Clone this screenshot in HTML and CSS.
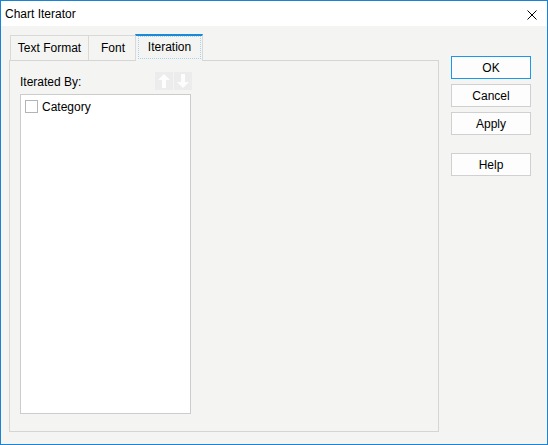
FILE: index.html
```html
<!DOCTYPE html>
<html>
<head>
<meta charset="utf-8">
<link rel="stylesheet" href="styles.css">
</head>
<body>
<div class="window">
  <div class="titlebar">
    <span class="title">Chart Iterator</span>
    <svg class="close" width="10" height="10" viewBox="0 0 10 10"><path d="M0.5 0.5 L9.5 9.5 M9.5 0.5 L0.5 9.5" stroke="#000" stroke-width="1" fill="none"/></svg>
  </div>
  <div class="body">
    <div class="tabctl">
      <div class="tabs">
        <div class="tab first">Text Format</div>
        <div class="tab mid">Font</div>
        <div class="tab active"><span class="focus">Iteration</span></div>
      </div>
      <div class="panel">
        <div class="col">
          <div class="row">
            <span class="label">Iterated By:</span>
            <div class="arrows">
              <span class="arrow"><svg width="18" height="18" viewBox="0 0 18 18"><polygon points="9,2 15,8 11,8 11,16 7,16 7,8 3,8" fill="#fdfdfd"/></svg></span>
              <span class="arrow"><svg width="18" height="18" viewBox="0 0 18 18"><polygon points="9,16 15,10 11,10 11,2 7,2 7,10 3,10" fill="#fdfdfd"/></svg></span>
            </div>
          </div>
          <div class="list">
            <div class="item"><span class="cb"></span><span>Category</span></div>
          </div>
        </div>
      </div>
    </div>
    <div class="buttons">
      <div class="btn default">OK</div>
      <div class="btn">Cancel</div>
      <div class="btn">Apply</div>
      <div class="btn help">Help</div>
    </div>
  </div>
</div>
</body>
</html>
```

FILE: styles.css
```css
html, body {
  margin: 0;
  padding: 0;
}
body {
  font-family: "Liberation Sans", Arial, sans-serif;
  font-size: 12px;
  color: #000;
}
.window {
  width: 548px;
  height: 445px;
  box-sizing: border-box;
  border: 1px solid #1883d7;
  display: flex;
  flex-direction: column;
  background: #f4f5f3;
}
.titlebar {
  height: 25px;
  background: #fff;
  display: flex;
  align-items: center;
  justify-content: space-between;
  padding: 0 10px 0 4px;
  flex: none;
}
.title {
  line-height: 14px;
  margin-top: 1px;
}
.close {
  display: block;
  margin-top: 2px;
}
.body {
  flex: 1;
  display: flex;
  padding: 8px 0 0 8px;
}
.tabctl {
  width: 430px;
  display: flex;
  flex-direction: column;
}
.tabs {
  display: flex;
  align-items: flex-end;
  height: 26px;
  padding-left: 1px;
}
.tab {
  box-sizing: border-box;
  height: 25px;
  border-top: 1px solid #d9d9d9;
  display: flex;
  align-items: center;
  justify-content: center;
  background: #f4f5f3;
}
.tab.first {
  width: 79px;
  border-left: 1px solid #d9d9d9;
  border-right: 1px solid #d9d9d9;
}
.tab.mid {
  width: 46px;
  padding-left: 2px;
}
.tab.active {
  width: 68px;
  height: 27px;
  margin-bottom: -1px;
  position: relative;
  z-index: 1;
  border-top: 2px solid #1b8ad6;
  border-left: 1px solid #d9d9d9;
  border-right: 1px solid #d9d9d9;
  padding: 0 1px 2px 2px;
  align-items: stretch;
}
.focus {
  flex: 1;
  display: flex;
  align-items: center;
  justify-content: center;
  border: 1px dotted #a7d2ee;
  padding-bottom: 1px;
}
.panel {
  box-sizing: border-box;
  height: 372px;
  border: 1px solid #d5d5d5;
  padding: 11px 0 0 10px;
}
.col {
  width: 171px;
}
.row {
  height: 18px;
  display: flex;
  align-items: center;
  justify-content: space-between;
}
.label {
  margin-top: 2px;
}
.arrows {
  display: flex;
  gap: 1px;
  margin-right: -1px;
}
.arrow {
  width: 18px;
  height: 18px;
  background: #ececec;
  display: block;
}
.arrow svg {
  display: block;
}
.list {
  box-sizing: border-box;
  margin-top: 4px;
  height: 320px;
  border: 1px solid #cccccc;
  background: #fff;
  padding: 5px 4px;
}
.item {
  display: flex;
  align-items: center;
  gap: 4px;
  height: 13px;
}
.cb {
  box-sizing: border-box;
  width: 13px;
  height: 13px;
  border: 1px solid #b4b4b4;
  background: #fff;
}
.buttons {
  margin: 22px 0 0 12px;
  display: flex;
  flex-direction: column;
}
.btn {
  box-sizing: border-box;
  width: 80px;
  height: 23px;
  border: 1px solid #d0d0d0;
  background: #fdfdfd;
  display: flex;
  align-items: center;
  justify-content: center;
  margin-bottom: 5px;
}
.btn.default {
  border-color: #1c97ea;
}
.btn.help {
  margin-top: 13px;
}
```
